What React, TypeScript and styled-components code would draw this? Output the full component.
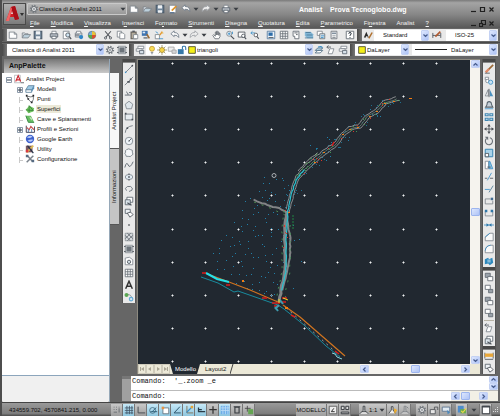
import React from "react";
import styled, { createGlobalStyle, css } from "styled-components";

const Global = createGlobalStyle`
  * { box-sizing: border-box; }
  body { margin: 0; background: #666; font-family: "Liberation Sans", Arial, sans-serif; font-size: 6px; line-height: 8px; color: #111; }
  button, select, input { font: inherit; color: inherit; margin: 0; padding: 0; border: 0; background: none; border-radius: 0; }
  ul { list-style: none; margin: 0; padding: 0; }
  svg { display: block; }
`;

/* ---------- icons, drawn on a 12 x 12 field ---------- */

const D = "#4b5058";
const B = "#3a8fc8";
const G = "#7d848c";
const ln = (d: string, stroke = D, w = 1, fill = "none") => (
  <path d={d} stroke={stroke} strokeWidth={w} fill={fill} />
);

const icons: Record<string, React.ReactNode> = {
  new: ln("M1.5 2.5h6l3 2.500v5h-9zM7.500 2.500v2.500h3", G, 1, "#fdfdfd"),
  open: <>{ln("M1.5 9.500v-6h3l1 1h3v2", G, 1, "#dfe5ea")}{ln("M1.500 9.500l2-4h8l-3 4z", G, 1, "#bcd0dc")}</>,
  save: <>{ln("M1.500 1.500h9v9h-9z", "#4c5c6c", 1.400, "#73879a")}<path d="M3.500 1.500h5v4h-5zM3.500 7.500h5v3h-5z" fill="#eef1f4" /></>,
  edit: <>{ln("M1.500 1.500h8v9h-8z", G, 1, "#fff")}{ln("M4.500 8L10 2.500", "#e0942a", 2)}{ln("M2.500 10.500h5", "#3b5f8a")}</>,
  print: <>{ln("M3.500 5V1.500h5V5", G, 1, "#fff")}{ln("M1.500 4.500h9v4h-9z", "#59626c", 1, "#b6bdc4")}{ln("M3.500 7.500h5v3h-5z", "#59626c", 1, "#fff")}</>,
  preview: <>{ln("M1.500 1.500h7v9h-7z", G, 1, "#fff")}<circle cx="7" cy="6" r="2.500" stroke={D} fill="#cfe4f2" />{ln("M9 8l2 3", D, 1.300)}</>,
  plot: <>{ln("M1.500 3.500h8v5h-8z", G, 1, "#c8ced3")}{ln("M3 3.500v-2h5v2", G, 1, "#fff")}<circle cx="8.500" cy="8.500" r="2.500" fill="#2f86c8" />{ln("M1.500 6h5", D)}</>,
  globe: <><circle cx="6" cy="6" r="4.500" fill="#78aede" stroke="#5a7a98" /><path d="M6 6V1.500A4.500 4.500 0 0 1 10.500 6z" fill="#e8c23a" /><path d="M6 6h4.500A4.500 4.500 0 0 1 6 10.500z" fill="#d9502f" /><path d="M6 6v4.500A4.500 4.500 0 0 1 1.500 6z" fill="#57a84c" /></>,
  cut: <>{ln("M2.500 1.500l6 7M9.500 1.500l-6 7", "#55595e", 1.300)}<circle cx="3" cy="9.500" r="1.300" fill="none" stroke={D} /><circle cx="9" cy="9.500" r="1.300" fill="none" stroke={D} /></>,
  copy: <>{ln("M1.500 1.500h5v7h-5z", G, 1, "#fff")}{ln("M4.500 3.500h4l2 2v5h-6z", G, 1, "#fff")}</>,
  paste: <>{ln("M2.500 2.500h6v8h-6z", "#66625c", 1.400, "#b5ac9c")}{ln("M5.500 5.500h5v5h-5z", G, 1, "#fff")}{ln("M4 1.500h3", D, 1.500)}</>,
  match: <><path d="M1 1h7v6H1z" fill="#3f74b0" /><path d="M2 2h3v2H2z" fill="#dbe8f4" />{ln("M7 5l3 5", "#9a6a35", 2)}{ln("M3 9.500h5", "#5c6670", 1.500)}</>,
  block: <>{ln("M1.500 5.500h5v5h-5z", G, 1, "#fff")}{ln("M7 6l3-4", "#e39a33", 1.600)}{ln("M6 10.500h5M2 2l3 2", B)}<path d="M9 1l1 2 2 .5-2 1z" fill="#e8b53b" /></>,
  undo: <><path d="M1 4.500l4-3.500v2q6 0 5.500 6-1.500-3-5.500-2.800V8z" fill="#fafafa" stroke="#6c7885" /></>,
  redo: <><path d="M11 4.500L7 1v2q-6 0-5.500 6Q3 6 7 6.200V8z" fill="#eee" stroke="#9b9fa3" /></>,
  caret: <path d="M3 4.500h6L6 8z" fill="#393d42" />,
  hand: ln("M3.500 10.500L1 6.500l1-1 2 2V2.500h1.300V6V1.500H7V6V2.500h1.300V6.500V4h1.300v4l-1.500 2.500z", "#656b72", 1, "#fff"),
  zoom: <><circle cx="5" cy="4.500" r="3" fill="#e2edf5" stroke={G} />{ln("M7 7l4 4", D, 1.400)}{ln("M3.500 4.500h3M5 3v3M9 2v3", B)}</>,
  zoomwin: <>{ln("M1.500 2.500h8v6h-8z", D, 1, "#fff")}<circle cx="7.500" cy="7" r="2" fill="#fff" stroke={D} />{ln("M9 8.500l2 2.500", D, 1.300)}</>,
  zoomprev: <>{ln("M1 3.500h5M1 3.500l2-2M1 3.500l2 2", B)}<circle cx="7" cy="6" r="2.200" fill="#fff" stroke={D} />{ln("M8.500 8l2 2.500", D, 1.300)}</>,
  props: <>{ln("M1.500 1.500h9v9h-9z", "#52779c", 1, "#eef4f9")}<path d="M3 3h5v4H3z" fill="#2c6ca8" />{ln("M3 9h6", D)}</>,
  table: <>{ln("M1.500 1.500h9v9h-9z", "#666d75", 1, "#fff")}{ln("M1.500 4.500h9M1.500 7.500h9M4.500 1.500v9M7.500 1.500v9", "#666d75")}</>,
  tool: <>{ln("M2.500 1.500h7v9h-5v-3h-2z", "#606870", 1, "#fff")}{ln("M4 3.500h4M6 5.500h2", D)}</>,
  sheet: <><path d="M1 2h7l3 3v5H4L1 7z" fill="#83b7d6" />{ln("M1 9.500h10M2 3h6M3 6h7", "#4a7695")}</>,
  markup: <>{ln("M1.500 1.500h6v5h-6z", G, 1, "#fff")}{ln("M4.500 4.500h6v6h-6z", "#69727a", 1, "#dce5ec")}{ln("M6 7h4M6 9h3", B)}</>,
  calc: <>{ln("M2.500 1.500h7v9h-7z", "#676e76", 1, "#fff")}<path d="M3.500 3h5v2h-5z" fill="#82919f" />{ln("M4 7h4M4 9h4", G, 1)}</>,
  help: <>{ln("M1.500 1.500h9v9h-9z", "#5d656d", 1, "#fff")}{ln("M4.500 4.500q0-1.500 1.500-1.500t1.500 1.500q0 1-1.500 1.500v1M6 8.500v1", "#26303a", 1.200)}</>,
  style: <><path d="M1 9L4 2l3 7H5.500V7.500h-2V9z" fill="#2b2b2b" />{ln("M7 10l4-7", "#b0702d", 1.800)}</>,
  dim: <>{ln("M1 3.500v6M10.500 3.500v6M1 6.500h9", "#444a50")}{ln("M4 8l6-6", "#b05b32", 2)}</>,
  gear: <><circle cx="6" cy="6" r="4" fill="none" stroke="#777d83" strokeWidth="2" strokeDasharray="1.600 1.500" /><circle cx="6" cy="6" r="3" fill="#e7e9eb" stroke="#555b61" /><circle cx="6" cy="6" r="1" fill="#555b61" /></>,
  hatch: <>{ln("M1.500 1.500h9v9h-9z", "#8b9197", 1, "#d6dadd")}{ln("M1.500 4l6 6.500M4 1.500l6.500 6.500M8 1.500L1.500 8M10.500 4L4 10.500", "#686e75")}</>,
  gradient: <>{ln("M1.500 1.500h9v9h-9z", "#8b9197", 1, "#c6cace")}<path d="M3 3h6v6H3z" fill="#6d747b" />{ln("M0 3h2M0 9h2M10 3h2M10 9h2", D)}</>,
  layers: <>{ln("M3.500 1.500h7v3h-7z", G, 1, "#fff")}{ln("M1.500 4.500h7v3h-7z", G, 1, "#fff")}{ln("M5.500 6.500h5v4h-5z", "#59636d", 1, "#d8e2ea")}</>,
  bulb: <><circle cx="6" cy="4.500" r="3" fill="#f8dc55" stroke="#c29a39" />{ln("M4.500 9h3M5 10.500h2", G)}</>,
  sun: <>{ln("M6 0v12M0 6h12M2 2l8 8M10 2l-8 8", "#999066")}<circle cx="6" cy="6" r="3" fill="#f6d344" stroke="#a88e3b" /></>,
  freeze: <>{ln("M1.500 2.500h7v5h-7z", "#a3a3a3", 1, "#eee")}{ln("M6 6h5v4h-5z", "#a3a3a3", 1, "#d6d6d6")}</>,
  lock: <><path d="M1 5h7v6H1z" fill="#3678a8" />{ln("M6.500 5V2.500q0-1 1.500-1h1q1.500 0 1.500 2V6", "#3678a8", 1.300)}</>,
  yellow: <path d="M2 2h8v8H2z" fill="#f4ef19" stroke="#45432a" />,
  layprev: <>{ln("M1.500 6.500l3-3h6l-3 3z", "#4a697f", 1, "#b6d6e8")}{ln("M1.500 9.500l3-3h6l-3 3z", "#4a697f", 1, "#fff")}{ln("M5 2.500q4-2 5 1", B, 1.300)}</>,
  layiso: <>{ln("M4.500 4.500h5l-2 6h-5z", G, 1, "#fff")}{ln("M1 2.500h5M1 2.500l2-2M1 2.500l2 2", "#4f565d")}</>,
  line: <>{ln("M2 10L10 2", "#70777e")}<circle cx="2" cy="10" r="1" fill={B} /><circle cx="10" cy="2" r="1" fill={D} /></>,
  xline: <>{ln("M1 11L11 1", "#70777e")}<path d="M4 6h3v2H4zM7 3h2v2H7z" fill={D} /></>,
  pline: ln("M1 8.500h4q0-3-2.500-4M5 8.500h3.500q2-1 0-3H6", "#6b737b", 1.200),
  poly: ln("M6 1.500L10.500 5 9 10.500H3L1.500 5z", G, 1, "#dfe6eb"),
  rect: <>{ln("M1.500 2.500h9v7h-9z", "#6b737b", 1, "#e6ebef")}<path d="M1 1h2v2H1zM9 8h2v2H9z" fill={D} /></>,
  arc: <>{ln("M1.500 10.500Q2 3 10.500 2", "#6b737b")}<path d="M3 4h2v2H3z" fill={D} /></>,
  circle: <><circle cx="6" cy="6" r="4.500" fill="#eef3f7" stroke={G} />{ln("M6 6l3-3M5 6h2", D)}</>,
  cloud: ln("M3 2Q6 0 8 2q3 0 2 3 2 3-1 4-1 2-4 1-3 1-3-2-2-2 0-3-1-2 1-3z", "#6f7880", 1, "#f6f8fa"),
  spline: ln("M1 9q2-8 4-3t6-4", "#6b737b", 1.200),
  ellipse: <><ellipse cx="6" cy="6" rx="4.500" ry="3" fill="#e3edf4" stroke={G} /><path d="M5 5h2v2H5zM5.500 1.500h1v2h-1zM5.500 8.500h1v2h-1z" fill={D} /></>,
  elarc: ln("M3 8q-3-3 1-5 5-1 6 2t-4 4", "#6b737b", 1.100),
  insert: <>{ln("M3.500 1.500h7v6h-7z", "#59616a", 1, "#fff")}{ln("M1.500 4.500h6v6h-6z", "#59616a", 1, "#dbe4ea")}{ln("M4 8l5 3", D, 1.300)}</>,
  makeblock: <>{ln("M1.500 1.500h6v5h-6z", "#59616a", 1, "#eef1f4")}<path d="M4 6l4-1 3 3-4 3z" fill="#fff" stroke={D} /></>,
  point: <path d="M5 5h2v2H5z" fill="#5a5d61" />,
  region: <>{ln("M1.500 2.500l5-1 4 3v6h-9z", G, 1, "#fff")}<circle cx="6" cy="7" r="2" fill="#d5e0e8" stroke={D} /></>,
  text: ln("M2 10.500L6 1.500l4 9M3.500 7.500h5", "#333", 1.800),
  addsel: <>{ln("M4 3q5 0 5 4", G)}<circle cx="3" cy="3.500" r="2.400" fill="#5aa653" /><circle cx="8.500" cy="8.500" r="2.800" fill="#58a4d2" />{ln("M8.500 7v3M7 8.500h3", "#fff")}</>,
  erase: <>{ln("M5 7l6-6", "#9c6a38", 2)}<path d="M1 9l4-4 2 2-4 4z" fill="#e08a67" />{ln("M1 11h6", D)}</>,
  copyobj: <>{ln("M1.500 1.500h4v3h-4z", G, 1, "#fff")}<circle cx="4" cy="6" r="2" fill="#fff" stroke={G} /><circle cx="8" cy="7.500" r="2.500" fill="#c9e1f1" stroke={B} /></>,
  mirror: <>{ln("M5 2L1.500 9.500H5z", G, 1, "#fff")}<path d="M7 2l4 8H7z" fill="#4b91c0" />{ln("M6 1v10", D)}</>,
  offset: <>{ln("M2 8.500h8.500Q9 6 8.500 3Q6 1 4 3 4 6 2 8.500z", "#58646e", 1.300, "#c8d1d9")}{ln("M1 10.500h10", B)}</>,
  array: ln("M1.500 2h3.500v2.500H1.500zM7 2h3.500v2.500H7zM1.500 7.500H5V10H1.500zM7 7.500h3.500V10H7z", "#3f86b2", 1.300, "#dcebf4"),
  move: <>{ln("M6 1v10M1 6h10", "#4b4f55", 1)}<path d="M6 0l2 3H4zM6 12l2-3H4zM0 6l3-2v4zM12 6L9 4v4z" fill="#4b4f55" /></>,
  rotate: <>{ln("M7 2a4.300 4.300 0 1 1-4 1", "#6a7077", 1.300)}<path d="M1 1h4v4z" fill="#6a7077" /></>,
  scale: <>{ln("M1.500 1.500h9v9h-9z", "#3a86b3", 1.200, "#a9d2e8")}{ln("M1.500 6.500h4v4h-4z", D, 1, "#fff")}</>,
  stretch: <>{ln("M1.500 1.500h4v9h-4z", G, 1, "#fff")}{ln("M6 1.500h1l3.500 9H6z", B, 1, "#8dc3e0")}{ln("M4 8.500h4", D)}</>,
  trim: <>{ln("M1 7.500h3M7 7.500h4", D)}{ln("M4 10L9 1", B)}</>,
  extend: <>{ln("M1 6.500h6", B)}{ln("M6 10l5-8", "#4b7893")}</>,
  breakat: <>{ln("M1.500 9.500v-6h6M1.500 9.500h9v-4", G)}<path d="M8 2h3v3H8z" fill="#426c93" /></>,
  brk: <>{ln("M1.500 4v5.500h9V4", G)}<path d="M1 2h3v3H1zM8 2h3v3H8z" fill="#3178a8" /></>,
  join: <>{ln("M0 6h12", B)}<path d="M3 4l3 2-3 2zM9 4L6 6l3 2z" fill="#2b77aa" /></>,
  chamfer: <>{ln("M1.500 10.500V6L7 1.500h4v9z", G, 1, "#fafafa")}{ln("M1.500 6L7 1.500", B)}</>,
  fillet: <>{ln("M1.500 10.500V8Q2 2 8 1.500h3v9z", G, 1, "#fafafa")}{ln("M1.500 8Q2 2 8 1.500", B)}</>,
  explode: <><path d="M1 4l4-2 1 2 4-2 1 6-4 3-2-2-4 1z" fill="#2e89bd" />{ln("M4 5h4M4 7h4", "#cce4f2")}</>,
  order1: <>{ln("M1.500 1.500h6v5h-6z", "#606870", 1, "#9aa2aa")}{ln("M4.500 5.500h6v5h-6z", "#606870", 1, "#fff")}</>,
  order2: <>{ln("M5.500 6.500h5v4h-5z", "#606870", 1, "#9aa2aa")}{ln("M1.500 1.500h6v5h-6z", "#606870", 1, "#fff")}</>,
  measure: <>{ln("M1 2v7M11 2v7", D)}<path d="M1 3h10v4H1z" fill="#e7a63a" />{ln("M1 10h10", D)}</>,
  snap: <path d="M2 2h1v1H2zM5 2h1v1H5zM8 2h1v1H8zM2 5h1v1H2zM5 5h1v1H5zM8 4h1v5H8zM2 8h4v1H2z" fill="#5b6066" />,
  grid: ln("M3.500 1v10M6.500 1v10M9.500 1v10M1 3.500h10M1 6.500h10M1 9.500h10", "#3f5061"),
  ortho: ln("M2.500 2v7.500H11", "#4c5157", 1.200),
  polar: <><circle cx="5.500" cy="6.500" r="3.500" fill="none" stroke="#456d82" />{ln("M3 8h8M5 8l5-5", "#24566e")}</>,
  osnap: <>{ln("M3.500 3.500h7v7h-7z", "#60707b", 1, "#fff")}<path d="M2 2h3v3H2z" fill="#e59244" /></>,
  angle: ln("M9.500 2L2.500 9.500h8", "#315a72", 1.200),
  ducs: <>{ln("M3.500 1v8.500H11", "#7c6a4a", 1)}{ln("M3 9l6-6", B, 1.300)}<path d="M8 1h3v3H8z" fill="#e8a335" /></>,
  dyn: <>{ln("M3 3v5h8M3 5.500h4", "#2a3c48", 1.500)}</>,
  plus: ln("M6 1.500v9M1.500 5.500h9", "#333", 1.500),
  trans: <><path d="M1 1h10v10H1z" fill="#6eaee8" />{ln("M1 3.500h10M1 6.500h10M3.500 1v10M6.500 1v10M9.500 1v10", "#c1def5")}</>,
  prop: ln("M3.500 2.500h5v7h-5zM2 2h8", "#34393e", 1.300),
  cursor: <>{ln("M1 4h7M4 1v7", "#444")}<path d="M5 5h6v6H5z" fill="#64a452" /></>,
  model: <>{ln("M1.500 1.500h9v9h-9z", "#555", 1, "#eee")}{ln("M4 8l3-4M4 8h4", "#333", 1.200)}</>,
  layout: ln("M1.500 1.500h3.500v4h-3.500zM7 1.500h3.500v4H7zM1.500 8.500h9v2h-9z", "#383c40", 1.200, "#ddd"),
  compass: ln("M1 10.500l4-4v-5h2v5l4 4M3.500 8h5", "#383d42", 1.100, "#eee"),
  annoadd: <>{ln("M1 10l3-4V2h2v4l3 4", "#383d42", 1, "#eee")}<path d="M7 4l4 2-3 5z" fill="#efad2a" /></>,
  annooff: ln("M1 10.500l4-4v-5h2v5l4 4M3.500 8h5M8 2l2 2", "#777c81", 1, "#ccc"),
  unlock: <>{ln("M1.500 5.500h6v5h-6z", "#4a4e53", 1, "#e6e6e6")}{ln("M6.500 5V2.500h4V6", "#4a4e53")}</>,
  perf: <>{ln("M1.500 2.500h9v5h-9z", "#57708e", 1, "#dfe9f2")}<path d="M7 6l4 3-3 2z" fill="#4a88bc" /></>,
  cube: <><path d="M1 1h7v8H1z" fill="#4d8ccb" /><path d="M4 5h7v5H4z" fill="#6cac49" />{ln("M5 7l2 2 4-5", "#f0d84d", 1.300)}</>,
  clean: <>{ln("M1.500 1.500h9v9h-9z", "#32363b", 1.200, "#fff")}<path d="M1 1h10v2H1z" fill="#42474d" /></>,
  root: <>{ln("M.5 1.500h7v9h-7z", "#b3b7bb", 1, "#fff")}{ln("M2 9l3-7 3 7M3 7h4", "#cc2630", 1.300)}{ln("M8 10.500h4", D)}</>,
  modelli: <><path d="M1 7l3-5h7L8 7z" fill="#9cc9e5" stroke="#5b7f9a" /><path d="M1 7h7v3H1z" fill="#fff" stroke="#5b7f9a" /><path d="M8 7l3-5v3L8 10z" fill="#5790b8" /></>,
  punti: <>{ln("M2 2.500l5 1 3-1v4l-2 4-4-4z", "#606468")}<path d="M1 1h2v2H1zM9 1h2v2H9zM3 5h2v2H3zM7 9h2v2H7z" fill="#202225" /></>,
  superf: <><path d="M1 7l4-5 6 3-1 4-6 2z" fill="#71c45f" />{ln("M1 7l9 1M5 2v8M5 2l5 6", "#37843a")}</>,
  cave: <><path d="M1 2h6l4 8H4z" fill="#68bd62" />{ln("M1 2l3 8h7", "#3b8b48", 1.200)}<path d="M5 3l3 2v3z" fill="#e4f1e1" /></>,
  profili: <>{ln("M1.500 2v8h10V3", "#4b4a5d", 1.200)}{ln("M2 4l3 3 2-4 4 4", "#c54c4c", 1.300)}{ln("M4 10V6M8 10V6", "#4276ab")}</>,
  earth: <><circle cx="6" cy="6" r="5" fill="#3d61ce" /><path d="M2 4q4-3 7-1Q6 6 2 4zM3 8q4-2 7-1-3 4-7 1z" fill="#b8cbf6" /></>,
  utility: <><path d="M1 2h8v8H1z" fill="#7b5a62" />{ln("M2 10l8-8", "#e0bd54", 2)}{ln("M3 2l7 9", "#273448", 1.500)}<path d="M1 7h3v3H1z" fill="#db3942" /></>,
  config: <>{ln("M2 10l8-8M3 2l6 7", "#7a828b", 1.800)}<path d="M8 7h3v3H8zM1 1h3v3H1z" fill="#566b83" /></>,
};

const Glyph = styled.svg`
  flex: none;
  width: 10px;
  height: 10px;
`;
const Icon = ({ name }: { name: string }) => (
  <Glyph viewBox="0 0 12 12" aria-hidden="true">{icons[name]}</Glyph>
);

/* ---------- shared parts ---------- */

const IconButton = styled.button`
  display: flex;
  flex: none;
  align-items: center;
  justify-content: center;
  width: 12px;
  height: 12px;
`;
const CaretButton = styled(IconButton)`
  width: 6px;
  overflow: hidden;
`;
const Tools = ({ names }: { names: string[] }) => (
  <>
    {names.map((n, i) =>
      n === "caret" ? (
        <CaretButton key={i} aria-label="More"><Icon name={n} /></CaretButton>
      ) : (
        <IconButton key={i} aria-label={n}><Icon name={n} /></IconButton>
      )
    )}
  </>
);

const luna = css`
  background: linear-gradient(135deg, #dde7fe, #aec3f6);
  border: 1px solid #c4d2f4;
  border-radius: 1px;
`;
const Arrow = styled.span`
  ${luna}
  display: grid;
  place-items: center;
  flex: none;
  width: 8px;
  align-self: stretch;
`;
const ScrollButton = styled.button`
  ${luna}
  display: grid;
  place-items: center;
  flex: none;
  width: 9px;
  height: 8px;
`;
const ScrollThumb = styled(ScrollButton)`
  border-color: #9db5ee;
`;
const turns = { down: 0, left: 90, up: 180, right: 270 };
const Chevron = ({ to = "down" }: { to?: keyof typeof turns }) => (
  <svg width="5" height="5" viewBox="0 0 5 5" aria-hidden="true">
    <path d="M.500 1.500l2 2 2-2" fill="none" stroke="#465b8c" strokeWidth="1.200" transform={`rotate(${turns[to]} 2.500 2.500)`} />
  </svg>
);

const Field = styled.label<{ $basis?: number; $lead?: number }>`
  display: flex;
  align-items: center;
  flex: ${(p) => (p.$basis ? `0 0 ${p.$basis}px` : "1 1 0")};
  min-width: 0;
  height: 11px;
  padding-left: ${(p) => p.$lead ?? 3}px;
  background: #fff;
`;
const Select = styled.select`
  appearance: none;
  flex: 1;
  min-width: 0;
  height: 11px;
  outline: none;
`;
type ComboProps = { label: string; value: string; basis?: number; lead?: number; children?: React.ReactNode };
const Combo = ({ label, value, basis, lead, children }: ComboProps) => (
  <Field $basis={basis} $lead={lead}>
    {children}
    <Select aria-label={label}><option>{value}</option></Select>
    <Arrow><Chevron /></Arrow>
  </Field>
);

/* ---------- window frame ---------- */

const Window = styled.div`
  display: flex;
  flex-direction: column;
  min-height: 100vh;
  background: #666;
  border-left: 2px solid #4d4d4d;
`;
const Header = styled.header`
  display: flex;
  flex: none;
  height: 28px;
  background: linear-gradient(#7a7a7a, #a4a4a4 10%, #888 50%, #585858);
`;
const AppButton = styled.button`
  display: flex;
  align-items: center;
  flex: none;
  width: 23px;
  height: 22px;
  margin: 3px 0 0 1px;
  padding-left: 1px;
  background: linear-gradient(#b0b0b0, #7c7c7c);
  border: 1px solid #4a4a4a;
`;
const HeaderRows = styled.div`
  flex: 1;
  min-width: 0;
`;
const TitleRow = styled.div`
  display: flex;
  align-items: center;
  height: 18px;
  padding: 0 4px 0 1px;
`;
const WorkspaceSwitch = styled.label`
  display: flex;
  align-items: center;
  flex: none;
  width: 100px;
  height: 12px;
  margin-right: 1px;
  padding-left: 1px;
  background: linear-gradient(#b8b8b8, #999);
  border: 1px solid #c9c9c9;
  border-radius: 1px;
`;
const Title = styled.h1`
  flex: 1;
  margin: 0;
  padding-left: 60px;
  font-size: 7px;
  line-height: 9px;
  color: #fff;
  white-space: pre;
`;
const WindowButtons = styled.div`
  display: flex;
  flex: none;
`;
const WindowButton = styled.button`
  display: grid;
  place-items: center;
  width: 9px;
  height: 9px;
`;
const WinIcon = ({ d }: { d: string }) => (
  <svg width="7" height="7" viewBox="0 0 7 7" aria-hidden="true"><path d={d} fill="none" stroke="#1f1f1f" strokeWidth="1.200" /></svg>
);
const MenuRow = styled.nav`
  display: flex;
  align-items: center;
  height: 10px;
  padding: 0 4px 0 4px;
`;
const MenuList = styled.ul`
  display: flex;
  flex: 1;
  gap: 11px;
`;
const MenuItem = styled.button`
  color: #f3f3f3;
  display: block;
  white-space: nowrap;
`;
const menus = ["_File", "_Modifica", "_Visualizza", "I_nserisci", "Fo_rmato", "_Strumenti", "_Disegna", "_Quotatura", "_Edita", "_Parametrico", "Fi_nestra", "Analist", "_?"];
const MenuLabel = ({ text }: { text: string }) => {
  const at = text.indexOf("_");
  if (at < 0) return <>{text}</>;
  return <>{text.slice(0, at)}<u>{text[at + 1]}</u>{text.slice(at + 2)}</>;
};

/* ---------- toolbars ---------- */

const ToolRow = styled.div`
  display: flex;
  align-items: center;
  flex: none;
  height: 14px;
  padding-right: 2px;
`;
const LayerRow = styled(ToolRow)`
  margin-bottom: 3px;
  border-top: 1px solid #494949;
`;
const Bar = styled.div<{ $gap?: number; $basis?: number }>`
  display: flex;
  align-items: center;
  flex: ${(p) => (p.$basis ? `0 0 ${p.$basis}px` : "1 1 0")};
  min-width: 0;
  gap: ${(p) => p.$gap ?? 0}px;
  height: 12px;
  padding-right: 1px;
  background: #e9e9e9;
  overflow: hidden;
`;
const Grip = styled.span`
  flex: none;
  width: 5px;
  height: 12px;
  background: linear-gradient(90deg, #484848, #777);
`;
const Group = styled.div<{ $w: number }>`
  display: flex;
  justify-content: space-between;
  flex: none;
  width: ${(p) => p.$w}px;
`;
const groups: [number, string[]][] = [
  [37, ["new", "open", "save"]],
  [50, ["print", "preview", "plot", "globe"]],
  [63, ["cut", "copy", "paste", "match", "block"]],
  [38, ["undo", "caret", "redo", "caret"]],
  [50, ["hand", "zoom", "zoomwin", "zoomprev"]],
  [75, ["props", "table", "tool", "sheet", "markup", "calc"]],
  [12, ["help"]],
];
const LineSample = styled.span`
  flex: none;
  width: 32px;
  height: 1px;
  margin-right: 4px;
  background: #222;
`;

/* ---------- palette ---------- */

const Body = styled.main`
  display: flex;
  flex: 1;
`;
const Palette = styled.aside`
  display: flex;
  flex-direction: column;
  flex: none;
  width: 108px;
  border-right: 1px solid #96a8b8;
`;
const PaletteTitle = styled.h2`
  flex: none;
  height: 14px;
  margin: 0;
  padding-left: 5px;
  border-left: 2px solid #666;
  background: linear-gradient(#777, #c9c9c9);
  font-size: 7px;
  line-height: 14px;
`;
const TreeBox = styled.div`
  flex: 1;
  padding-top: 1px;
  background: #fff;
  border-bottom: 1px solid #8ca5bc;
`;
const Tree = styled.ul`
  display: grid;
  grid-template-rows: repeat(9, 1fr);
  height: 79px;
`;
const Node = styled.li<{ $child?: boolean }>`
  display: flex;
  align-items: center;
  padding-left: ${(p) => (p.$child ? 15 : 4)}px;
`;
const Box = styled.span`
  display: grid;
  place-items: center;
  flex: none;
  width: 6px;
  height: 5px;
  margin-right: 2px;
`;
const NodeText = styled.span<{ $on?: boolean }>`
  margin-left: 1px;
  padding: 0 1px;
  background: ${(p) => (p.$on ? "#ece9d8" : "none")};
  white-space: nowrap;
`;
const Expander = ({ kind }: { kind: string }) => (
  <svg width="6" height="6" viewBox="0 0 6 6" aria-hidden="true">
    {kind === "" ? (
      <path d="M2.500 0v6M3 3.500h3" fill="none" stroke="#c9c9c9" />
    ) : (
      <><path d="M.5.5h5v5h-5z" fill="#fff" stroke="#8b98a8" /><path d={kind === "+" ? "M1 3h4M3 1v4" : "M1 3h4"} stroke="#2e3d4d" /></>
    )}
  </svg>
);
const nodes = [
  ["-", "root", "Analist Project"],
  ["+", "modelli", "Modelli"],
  ["", "punti", "Punti"],
  ["", "superf", "Superfici"],
  ["", "cave", "Cave e Spianamenti"],
  ["+", "profili", "Profili e Sezioni"],
  ["", "earth", "Google Earth"],
  ["", "utility", "Utility"],
  ["", "config", "Configurazione"],
];
const PaletteFoot = styled.div`
  flex: none;
  height: 26px;
  background: #f0f0f0;
  border-radius: 0 0 1px 1px;
`;
const SideTabs = styled.div`
  display: flex;
  flex-direction: column;
  flex: none;
  width: 9px;
  padding-top: 14px;
`;
const SideTab = styled.button<{ $on?: boolean }>`
  height: 76px;
  background: ${(p) => (p.$on ? "#f7f7f7" : "#c4c4c4")};
  border-top: 1px solid #555;
  writing-mode: vertical-rl;
  transform: rotate(180deg);
  line-height: 9px;
  text-align: center;
`;

/* ---------- work area ---------- */

const Work = styled.div`
  display: flex;
  flex-direction: column;
  flex: 1;
  min-width: 0;
  padding: 0 2px 0 3px;
`;
const Desk = styled.div`
  display: flex;
  flex: 1;
  padding-right: 2px;
`;
const Rail = styled.div`
  display: flex;
  flex-direction: column;
  align-items: center;
  align-self: flex-start;
  flex: none;
  width: 14px;
  background: #e9e9e9;
  border: 1px solid #555;
  border-width: 0 1px;
  overflow: hidden;
`;
const RailGrip = styled.span`
  align-self: stretch;
  flex: none;
  height: 4px;
  background: #484848;
  border-bottom: 1px solid #888;
`;
const RailRule = styled.span`
  width: 10px;
  height: 1px;
  margin: 1px 0;
  background: #b9b4a6;
`;
const View = styled.section`
  display: flex;
  flex-direction: column;
  flex: 1;
  min-width: 0;
  margin: 0 2px 0 1px;
  border-left: 1px solid #8d8a80;
  border-top: 1px solid #8d8a80;
`;
const ViewRow = styled.div`
  display: flex;
  flex: 1;
`;
const Canvas = styled.svg`
  flex: 1;
  min-width: 0;
  width: 0;
  min-height: 304px;
  background: #212830;
`;
const VScroll = styled.div`
  display: flex;
  flex-direction: column;
  justify-content: space-between;
  align-items: center;
  flex: none;
  width: 10px;
  background: #f5f3ee;
`;
const Sheets = styled.div`
  display: flex;
  flex: none;
  height: 10px;
  background: #ece9d8;
`;
const Pager = styled.button`
  display: grid;
  place-items: center;
  width: 8px;
  border: 1px solid #d0ccbc;
  color: #aaa594;
`;
const PagerIcon = ({ d }: { d: string }) => (
  <svg width="6" height="6" viewBox="0 0 6 6" aria-hidden="true"><path d={d} fill="#aaa594" /></svg>
);
const SheetTab = styled.button<{ $on?: boolean }>`
  padding: 0 4px 0 5px;
  color: ${(p) => (p.$on ? "#fff" : "#222")};
  background: ${(p) => (p.$on ? "#212830" : "#ece9d8")};
  clip-path: polygon(0 0, 100% 0, calc(100% - 3px) 100%, 3px 100%);
`;
const HScroll = styled.div`
  display: flex;
  align-items: center;
  justify-content: space-between;
  width: 110px;
  margin: 0 10px 0 auto;
  background: #f5f3ee;
`;
const Console = styled.form`
  display: flex;
  flex: none;
  height: 25px;
  margin: 2px 0 1px;
  background: #fff;
  font-family: "Liberation Mono", "Courier New", monospace;
  font-size: 7px;
`;
const ConsoleGrip = styled.span`
  flex: none;
  width: 9px;
  background: #a0a0a0;
  border-top: 3px solid #777;
`;
const ConsoleLines = styled.div`
  flex: 1;
  min-width: 0;
`;
const History = styled.div`
  display: flex;
  justify-content: space-between;
  height: 15px;
  padding-left: 1px;
  line-height: 11px;
  white-space: pre;
  border-bottom: 1px solid #bbb;
`;
const HistoryScroll = styled.div`
  display: flex;
  flex-direction: column;
`;
const StepButton = styled(ScrollButton)`
  height: 7px;
`;
const Prompt = styled.label`
  display: flex;
  height: 10px;
  padding-left: 1px;
  line-height: 11px;
`;
const PromptInput = styled.input`
  flex: 1;
  min-width: 0;
  outline: none;
`;
const PromptScroll = styled.div`
  display: flex;
  align-items: center;
  flex: none;
  gap: 1px;
  width: 47px;
  padding-right: 10px;
  background: #f2f0e6;
`;
const Spacer = styled.span`
  flex: 1;
`;

/* ---------- status bar ---------- */

const Status = styled.footer`
  display: flex;
  align-items: center;
  flex: none;
  height: 14px;
  background: linear-gradient(#999, #7e7e7e 80%, #4a4a4a);
  border-top: 1px solid #444;
`;
const Coordinates = styled.output`
  flex: none;
  width: 109px;
  padding-left: 7px;
`;
const StatusButton = styled.button<{ $on?: boolean; $flat?: boolean }>`
  display: grid;
  place-items: center;
  flex: none;
  width: 12px;
  height: 12px;
  background: ${(p) => (p.$flat ? "none" : p.$on ? "linear-gradient(#c6e9f8, #8fc6de)" : "linear-gradient(#c9c9c9, #9d9d9d)")};
  border-right: 1px solid #777;
`;
const StatusGroup = styled.div<{ $ml: number }>`
  display: flex;
  flex: none;
  align-items: center;
  margin-left: ${(p) => p.$ml}px;
`;
const ModelButton = styled(StatusButton)`
  width: 31px;
`;
const ScaleButton = styled(StatusButton)`
  width: 28px;
  display: flex;
  align-items: center;
`;
const SizeGrip = styled.svg`
  margin: 0 1px 0 auto;
`;
const toggles: [string, boolean][] = [
  ["snap", false], ["grid", true], ["ortho", false], ["polar", true], ["osnap", true], ["angle", true],
  ["ducs", true], ["dyn", true], ["plus", false], ["trans", true], ["prop", false], ["cursor", false],
];

/* ---------- survey drawing ---------- */

type Pt = [number, number];
const random = (seed: number) => () => {
  seed = (seed * 16807) % 2147483647;
  return seed / 2147483647;
};
const walk = (pts: Pt[], step: number): Pt[] => {
  const out: Pt[] = [];
  for (let i = 1; i < pts.length; i++) {
    const [ax, ay] = pts[i - 1];
    const [bx, by] = pts[i];
    const n = Math.max(1, Math.round(Math.hypot(bx - ax, by - ay) / step));
    for (let k = 0; k < n; k++) out.push([ax + ((bx - ax) * k) / n, ay + ((by - ay) * k) / n]);
  }
  out.push(pts[pts.length - 1]);
  return out;
};
const rough = (pts: Pt[], spread: number, seed: number, dx = 0, dy = 0) => {
  const r = random(seed * 7919);
  return walk(pts, 3)
    .map(([x, y]) => `${(x + dx + (r() - 0.5) * spread).toFixed(1)},${(y + dy + (r() - 0.5) * spread).toFixed(1)}`)
    .join(" ");
};
const specks = (pts: Pt[], count: number, spread: number, seed: number): Pt[] => {
  const r = random(seed * 7919);
  const line = walk(pts, 1);
  return Array.from({ length: count }, () => {
    const [x, y] = line[Math.floor(r() * line.length)];
    return [Math.round(x + (r() - 0.5) * spread), Math.round(y + (r() - 0.5) * spread)] as Pt;
  });
};
const dots = (pts: Pt[]) => pts.map(([x, y]) => `M${x} ${y}h1v1h-1z`).join("");

const north: Pt[] = [[397, 99], [384, 103], [377, 111], [367, 117], [359, 127], [350, 129], [342, 135], [335, 145], [325, 152], [314, 161], [304, 170], [297, 178], [293, 189], [290, 200], [287, 211]];
const south: Pt[] = [[287, 211], [285, 225], [285, 250], [285, 270], [282, 285], [279, 303]];
const upper = north.slice(0, 12);
const cyanPath: Pt[] = [...north.slice(10, 14), [288, 211], [287, 225], [286, 250], [286, 272], [282, 290]];

const scatter = (): Pt[] => {
  const r = random(421337);
  const out: Pt[] = [];
  for (let y = 172; y < 296; y += 7) {
    const left = y < 200 ? 262 - (y - 172) * 0.6 : y < 255 ? 245 - (y - 200) * 0.7 : 206 + (y - 255) * 1.2;
    for (let x = left; x < 286; x += 8) {
      const px = Math.round(x + r() * 7);
      const py = Math.round(y + r() * 7);
      if (r() > 0.1 && py < 275 + (px - 208) * 0.36) out.push([px, py]);
    }
  }
  return out;
};
const marks: Pt[] = [];
for (let i = 0; i < 9; i++) for (let j = 0; j < 10; j++) marks.push([172 + i * 33, Math.round(63 + j * 33.1)]);

const Drawing = () => (
  <Canvas viewBox="138 60 332 304" preserveAspectRatio="xMidYMid slice" role="img" aria-label="Survey drawing">
    <path d={marks.map(([x, y]) => `M${x - 1} ${y}h3v1h-3zM${x} ${y - 1}h1v3h-1z`).join("")} fill="#8d9297" />
    <path d={dots(marks)} fill="#f2f2f2" />
    <path d={dots(scatter())} fill="#217fa8" />
    <path d={dots([[327, 137], [329, 139], [331, 142], [310, 145], [348, 140], [343, 137], [322, 157], [330, 156], [326, 160], [299, 239], [294, 240], [301, 261], [293, 288], [293, 225], [380, 116], [376, 107], [370, 109], [362, 122], [316, 148]])} fill="#217fa8" />
    <path d={dots(specks(north, 80, 13, 77))} fill="#1f6f8d" />
    <g fill="none">
      <polyline points={rough(north, 1, 5, -1, -2)} stroke="#8b8e90" strokeWidth="1" />
      <polyline points={rough(north, 1, 9, 2, 1)} stroke="#8b8e90" strokeWidth="1" />
      <polyline points={rough(upper, 1, 19)} stroke="#5d7368" strokeWidth="1" />
      <polyline points={rough([[318, 152], [305, 164], [296, 178]], 2, 13, -1, 2)} stroke="#4d8b50" strokeDasharray="3 4" />
      <polyline points={rough([[317, 153], [307, 161], [298, 171]], 1, 14)} stroke="#8b8e90" strokeWidth="1" />
      <polyline points={rough(south, 1, 15)} stroke="#828486" strokeWidth="3" />
      <polyline points={rough([[286, 215], [290, 235], [290, 255], [287, 272], [282, 290]], 1, 18)} stroke="#828486" strokeWidth="2" />
      <polyline points={rough([[254, 200], [270, 206], [279, 208], [287, 213]], 1, 17)} stroke="#828486" strokeWidth="2" />
      <polyline points="254,202 270,208 285,215" stroke="#4d8b50" strokeDasharray="2 6" />
      <polyline points="293,215 293,229" stroke="#208442" strokeDasharray="2 1" />
      <polyline points={rough(south, 1, 25, -3, 0)} stroke="#438d55" strokeDasharray="2 5" />
      <polyline points={rough(south.slice(1), 1, 27, 5, 0)} stroke="#438d55" strokeDasharray="2 6" />
      <polyline points={rough(cyanPath, 1, 31)} stroke="#2ac1cf" strokeWidth="1.200" />
      <polyline points="201,277 218,283 234,292 238,291 278,305 284,309 304,325 326,346 340,357" stroke="#188a9d" />
      <polyline points="205,273 229,282 250,290 278,302" stroke="#d1741f" strokeWidth="1.200" />
      <polyline points="283,305 300,317 345,356" stroke="#d1741f" strokeWidth="1.200" />
      <polyline points="206,273 217,279 229,282" stroke="#24e0e8" strokeWidth="2" />
      <polyline points="286,308 300,320 340,356" stroke="#999" strokeDasharray="2 4" />
      <circle cx="274" cy="175.500" r="2" stroke="#a9adb1" />
      <path d="M202 273h4M226 285h4M262 298h5M272 303h8M274 306h5M282 298h5M281 302h5M291 315l4 2M335 351l4 3M334 142l-2 4" stroke="#d91c1c" strokeWidth="1.500" />
      <path d="M332 353l3 1 2 3 5 2" stroke="#8fd6df" />
      <path d="M275 307l3 4M279 305l-4 4M280 300l3 4" stroke="#3f9db0" strokeWidth="2" />
      <path d="M279 299v4M288 300l-5-2" stroke="#e9dc2e" />
    </g>
    <path d={dots(specks(upper, 15, 6, 55))} fill="#d9362a" />
    <path d={dots(specks(south.slice(0, 3), 7, 4, 58))} fill="#d9362a" />
    <path d={dots(specks(upper, 28, 6, 59))} fill="#3f9452" />
    <path d="M409 98h3v1h-3zM393 101h2v1h-2zM384 103h2v1h-2zM376 111h2v1h-2zM369 116h2v1h-2zM357 127h2v1h-2zM349 129h2v1h-2zM342 134h2v1h-2zM323 152h2v1h-2zM314 162h2v1h-2zM242 280h2v2h-2zM288 212h2v1h-2zM285 307h3v2h-3z" fill="#f17d14" />
  </Canvas>
);

const drawTools = ["line", "xline", "pline", "poly", "rect", "arc", "circle", "cloud", "spline", "ellipse", "elarc", "insert", "makeblock", "point", "hatch", "gradient", "region", "table", "text", "addsel"];
const modifyTools = ["erase", "copyobj", "mirror", "offset", "array", "move", "rotate", "scale", "stretch", "trim", "extend", "breakat", "brk", "join", "chamfer", "fillet", "explode"];

export default function App() {
  return (
    <Window>
      <Global />
      <Header>
        <AppButton aria-label="Application menu">
          <svg width="20" height="18" viewBox="0 0 20 18" aria-hidden="true">
            <path d="M1 16L6 2l4-1 4 13-4 1-1-3H5l-1 4z" fill="#d51b22" />
            <path d="M6 2l4-1 4 13-4 1z" fill="#a90f18" />
            <path d="M1 16L6 2l1 2-3 12z" fill="#f26565" />
            <path d="M7 6l1 3H6z" fill="#ddd" />
            <path d="M15 8h4l-2 3z" fill="#303030" />
          </svg>
        </AppButton>
        <HeaderRows>
          <TitleRow>
            <WorkspaceSwitch>
              <Icon name="gear" />
              <Select aria-label="Workspace"><option>Classica di Analist 2011</option></Select>
              <CaretButton as="span"><Icon name="caret" /></CaretButton>
            </WorkspaceSwitch>
            <Group $w={111}><Tools names={["new", "open", "save", "edit", "undo", "caret", "redo", "caret", "print", "caret"]} /></Group>
            <Title>{"Analist    Prova Tecnoglobo.dwg"}</Title>
            <WindowButtons>
              <WindowButton aria-label="Minimize"><WinIcon d="M1 5.500h5" /></WindowButton>
              <WindowButton aria-label="Maximize"><WinIcon d="M1.500 1.500h4v4h-4z" /></WindowButton>
              <WindowButton aria-label="Close"><WinIcon d="M1.500 1.500l4 4M5.500 1.500l-4 4" /></WindowButton>
            </WindowButtons>
          </TitleRow>
          <MenuRow>
            <MenuList>
              {menus.map((m) => <li key={m}><MenuItem><MenuLabel text={m} /></MenuItem></li>)}
            </MenuList>
            <WindowButtons>
              <WindowButton aria-label="Minimize drawing"><WinIcon d="M1 5.500h5" /></WindowButton>
              <WindowButton aria-label="Restore drawing"><WinIcon d="M.500 3.500h3v3h-3zM2.500 3V.500h4v4H4" /></WindowButton>
              <WindowButton aria-label="Close drawing"><WinIcon d="M1.500 1.500l4 4M5.500 1.500l-4 4" /></WindowButton>
            </WindowButtons>
          </MenuRow>
        </HeaderRows>
      </Header>

      <ToolRow>
        <Grip />
        <Bar $gap={4} $basis={350}>
          {groups.map(([w, names], i) => <Group key={i} $w={w}><Tools names={names} /></Group>)}
        </Bar>
        <Grip />
        <Bar>
          <Tools names={["style"]} />
          <Combo label="Text style" value="Standard" basis={55} lead={9} />
          <Bar $basis={17}><Spacer /><Tools names={["dim"]} /><Spacer /></Bar>
          <Combo label="Dimension style" value="ISO-25" lead={9} />
        </Bar>
      </ToolRow>

      <LayerRow>
        <Grip />
        <Bar $basis={122}>
          <Combo label="Workspace" value="Classica di Analist 2011" lead={5} />
          <Tools names={["gear", "gradient"]} />
        </Bar>
        <Grip />
        <Bar $basis={216}>
          <Tools names={["layers"]} />
          <Combo label="Layer" value="triangoli" lead={1}>
            <Icon name="bulb" /><Icon name="sun" /><Icon name="freeze" /><Icon name="lock" /><Icon name="yellow" />
          </Combo>
          <Tools names={["layprev", "layiso", "layers"]} />
        </Bar>
        <Grip />
        <Bar $gap={3}>
          <Combo label="Colour" value="DaLayer" basis={54} lead={2}><Icon name="yellow" /></Combo>
          <Combo label="Line type" value="DaLayer"><LineSample /></Combo>
        </Bar>
      </LayerRow>

      <Body>
        <Palette>
          <PaletteTitle>AnpPalette</PaletteTitle>
          <TreeBox>
            <Tree>
              {nodes.map(([kind, icon, text], i) => (
                <Node key={text} $child={i > 0}>
                  <Box><Expander kind={kind} /></Box>
                  <Icon name={icon} />
                  <NodeText $on={text === "Superfici"}>{text}</NodeText>
                </Node>
              ))}
            </Tree>
          </TreeBox>
          <PaletteFoot />
        </Palette>
        <SideTabs>
          <SideTab $on>Analist Project</SideTab>
          <SideTab>Informazioni</SideTab>
        </SideTabs>
        <Work>
          <Desk>
            <Rail><RailGrip /><Tools names={drawTools} /></Rail>
            <View>
              <ViewRow>
                <Drawing />
                <VScroll>
                  <ScrollButton aria-label="Scroll up"><Chevron to="up" /></ScrollButton>
                  <ScrollThumb aria-label="Vertical position" />
                  <ScrollButton aria-label="Scroll down"><Chevron /></ScrollButton>
                </VScroll>
              </ViewRow>
              <Sheets>
                <Pager aria-label="First"><PagerIcon d="M1 1h1v4H1zM5 1v4L2 3z" /></Pager>
                <Pager aria-label="Previous"><PagerIcon d="M4 1v4L1 3z" /></Pager>
                <Pager aria-label="Next"><PagerIcon d="M2 1v4l3-2z" /></Pager>
                <Pager aria-label="Last"><PagerIcon d="M4 1h1v4H4zM1 1v4l3-2z" /></Pager>
                <SheetTab $on>Modello</SheetTab>
                <SheetTab>Layout2</SheetTab>
                <svg width="4" height="10" viewBox="0 0 4 10" aria-hidden="true"><path d="M0 10L3 0" stroke="#444" /></svg>
                <HScroll>
                  <ScrollButton aria-label="Scroll left"><Chevron to="left" /></ScrollButton>
                  <ScrollThumb aria-label="Horizontal position" />
                  <ScrollButton aria-label="Scroll right"><Chevron to="right" /></ScrollButton>
                </HScroll>
              </Sheets>
            </View>
            <Rail>
              <RailGrip /><Tools names={modifyTools} />
              <RailGrip /><Tools names={["order1", "order2", "order1", "order2"]} />
              <RailRule /><Tools names={["layiso", "insert"]} />
              <RailGrip /><Tools names={["measure", "makeblock"]} />
            </Rail>
          </Desk>
          <Console onSubmit={(e) => e.preventDefault()}>
            <ConsoleGrip />
            <ConsoleLines>
              <History>
                {"Comando:  '_.zoom _e"}
                <HistoryScroll>
                  <StepButton type="button" aria-label="Older"><Chevron to="up" /></StepButton>
                  <StepButton type="button" aria-label="Newer"><Chevron /></StepButton>
                </HistoryScroll>
              </History>
              <Prompt>
                Comando:
                <PromptInput aria-label="Comando" />
                <PromptScroll>
                  <ScrollButton type="button" aria-label="Left"><Chevron to="left" /></ScrollButton>
                  <ScrollThumb type="button" aria-label="Position" />
                  <Spacer />
                  <ScrollButton type="button" aria-label="Right"><Chevron to="right" /></ScrollButton>
                </PromptScroll>
              </Prompt>
            </ConsoleLines>
          </Console>
        </Work>
      </Body>

      <Status>
        <Coordinates>434559.702, 4570841.215, 0.000</Coordinates>
        {toggles.map(([n, on]) => <StatusButton key={n} $on={on} aria-label={n} aria-pressed={on}><Icon name={n} /></StatusButton>)}
        <StatusGroup $ml={41}>
          <ModelButton>MODELLO</ModelButton>
          <StatusButton aria-label="Model"><Icon name="model" /></StatusButton>
          <StatusButton aria-label="Layout"><Icon name="layout" /></StatusButton>
        </StatusGroup>
        <StatusGroup $ml={8}>
          <ScaleButton><Icon name="compass" />1:1<Icon name="caret" /></ScaleButton>
          <StatusButton aria-label="Annotation visibility"><Icon name="annoadd" /></StatusButton>
          <StatusButton aria-label="Annotation scales"><Icon name="annooff" /></StatusButton>
        </StatusGroup>
        <StatusGroup $ml={5}>
          <StatusButton aria-label="Workspace"><Icon name="gear" /></StatusButton>
          <StatusButton aria-label="Lock"><Icon name="unlock" /></StatusButton>
          <StatusButton aria-label="Performance"><Icon name="perf" /></StatusButton>
        </StatusGroup>
        <StatusGroup $ml={4}>
          <StatusButton aria-label="Status tray"><Icon name="cube" /></StatusButton>
          <StatusButton $flat aria-label="Tray menu"><Icon name="caret" /></StatusButton>
          <StatusButton aria-label="Clean screen"><Icon name="clean" /></StatusButton>
        </StatusGroup>
        <SizeGrip width="7" height="7" viewBox="0 0 7 7" aria-hidden="true"><path d="M5 1h1v1H5zM3 3h1v1H3zM5 3h1v1H5zM1 5h1v1H1zM3 5h1v1H3zM5 5h1v1H5z" fill="#ddd" /></SizeGrip>
      </Status>
    </Window>
  );
}
